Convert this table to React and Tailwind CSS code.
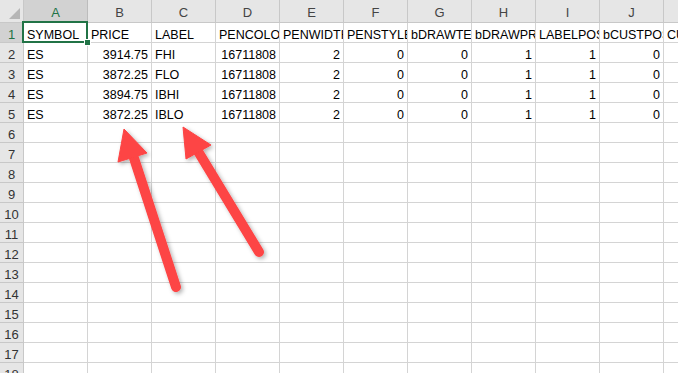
import React from "react";

const cols = ["A", "B", "C", "D", "E", "F", "G", "H", "I", "J", "K"];

const header = [
  "SYMBOL",
  "PRICE",
  "LABEL",
  "PENCOLOR",
  "PENWIDTH",
  "PENSTYLE",
  "bDRAWTEXT",
  "bDRAWPRICE",
  "LABELPOS",
  "bCUSTPOS",
  "CUSTPOS",
];

const rows = [
  ["ES", "3914.75", "FHI", "16711808", "2", "0", "0", "1", "1", "0"],
  ["ES", "3872.25", "FLO", "16711808", "2", "0", "0", "1", "1", "0"],
  ["ES", "3894.75", "IBHI", "16711808", "2", "0", "0", "1", "1", "0"],
  ["ES", "3872.25", "IBLO", "16711808", "2", "0", "0", "1", "1", "0"],
];

const textCols = [0, 2]; // SYMBOL and LABEL are text, the rest are numbers

const Cell = ({ value, right, active }) => (
  <div
    className={`relative h-[20px] w-[64px] shrink-0 border-r border-b border-[#d4d4d4] flex items-end pb-[1px] whitespace-nowrap ${
      right ? "justify-end pr-[3px]" : "pl-[3px]"
    } ${active ? "" : "overflow-hidden"}`}
  >
    <span>{value}</span>
    {active && (
      <>
        <div className="absolute z-10 -left-[2px] -top-[2px] -right-[1px] -bottom-[1px] border-2 border-[#217346]"></div>
        <div className="absolute z-10 -right-[4px] -bottom-[4px] w-[7px] h-[7px] bg-[#217346] border border-white"></div>
      </>
    )}
  </div>
);

const RowHead = ({ n, selected }) => (
  <div
    className={`h-[20px] w-[24px] shrink-0 border-r border-b border-[#c8c8c8] flex items-end justify-center pb-[1px] text-[13px] ${
      selected ? "bg-[#d2d2d2] text-[#217346]" : "bg-[#e6e6e6] text-[#333]"
    }`}
  >
    {n}
  </div>
);

const Arrows = () => (
  <svg
    className="absolute left-0 top-0 z-20 pointer-events-none"
    width="678"
    height="373"
    viewBox="0 0 678 373"
  >
    <defs>
      <filter id="sh" x="-50%" y="-50%" width="200%" height="200%">
        <feDropShadow dx="2" dy="2" stdDeviation="2" floodColor="#000" floodOpacity="0.3" />
      </filter>
    </defs>
    <g filter="url(#sh)" fill="#fd4444" stroke="#fd4444">
      <line x1="176" y1="287" x2="132" y2="152" strokeWidth="10" strokeLinecap="round" />
      <polygon points="124,129 118,162 147,153" strokeWidth="1" strokeLinejoin="round" />
      <line x1="259" y1="252" x2="196" y2="148" strokeWidth="10" strokeLinecap="round" />
      <polygon points="183,127 186,159 211,145" strokeWidth="1" strokeLinejoin="round" />
    </g>
  </svg>
);

export default function App() {
  const empty = Array.from({ length: 13 }, (_, i) => i + 6);

  return (
    <div
      className="relative w-[678px] h-[373px] overflow-hidden bg-white text-black text-[12.5px] leading-none"
      style={{ fontFamily: '"Liberation Sans", Arial, sans-serif' }}
    >
      {/* column headers */}
      <div className="flex h-[23px]">
        <div className="relative h-[23px] w-[24px] shrink-0 bg-[#e6e6e6] border-r border-b border-[#c8c8c8]">
          <svg className="absolute left-0 top-0" width="24" height="23">
            <polygon points="20,8 20,19 9,19" fill="#b6b6b6" />
          </svg>
        </div>
        {cols.map((c, i) => (
          <div
            key={c}
            className={`h-[23px] w-[64px] shrink-0 border-r border-b flex items-center justify-center pt-[2px] text-[13px] ${
              i === 0
                ? "bg-[#d2d2d2] text-[#217346] border-b-[#217346] border-r-[#bcbcbc]"
                : "bg-[#e6e6e6] text-[#444] border-[#c8c8c8]"
            }`}
          >
            {c}
          </div>
        ))}
      </div>

      {/* header row */}
      <div className="flex">
        <RowHead n={1} selected />
        {header.map((h, i) => (
          <Cell key={h} value={h} active={i === 0} />
        ))}
      </div>

      {/* data rows */}
      {rows.map((r, ri) => (
        <div key={ri} className="flex">
          <RowHead n={ri + 2} />
          {r.map((v, ci) => (
            <Cell key={ci} value={v} right={!textCols.includes(ci)} />
          ))}
          <Cell value="" />
        </div>
      ))}

      {/* empty rows */}
      {empty.map((n) => (
        <div key={n} className="flex">
          <RowHead n={n} />
          {cols.map((c) => (
            <Cell key={c} value="" />
          ))}
        </div>
      ))}

      <Arrows />
    </div>
  );
}
